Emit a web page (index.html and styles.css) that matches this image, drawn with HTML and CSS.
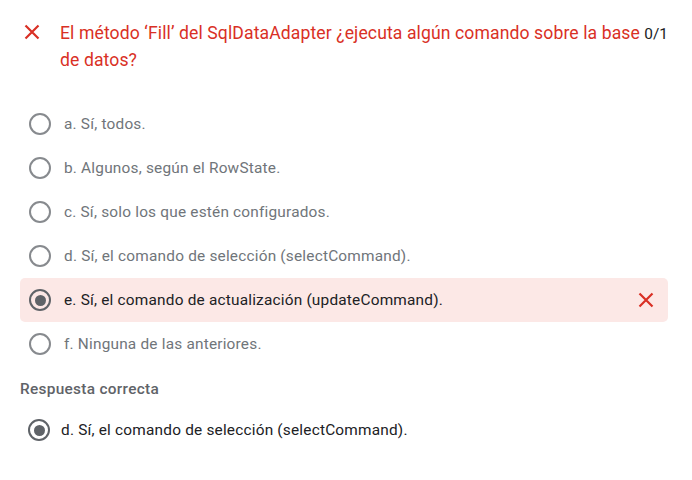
FILE: index.html
```html
<!DOCTYPE html>
<html lang="es">
<head>
<meta charset="utf-8">
<link rel="stylesheet" href="styles.css">
</head>
<body>
<div class="page">
  <div class="header">
    <svg class="x-icon" width="16" height="16" viewBox="0 0 16 16"><path d="M1.5 1.5 L14.5 14.5 M14.5 1.5 L1.5 14.5" stroke="#d93025" stroke-width="2.2" fill="none"/></svg>
    <div class="title">El método ‘Fill’ del SqlDataAdapter ¿ejecuta algún comando sobre la base de datos?</div>
    <div class="score">0/1</div>
  </div>
  <div class="options">
    <div class="row"><span class="radio"></span><span class="label">a. Sí, todos.</span></div>
    <div class="row"><span class="radio"></span><span class="label">b. Algunos, según el RowState.</span></div>
    <div class="row"><span class="radio"></span><span class="label">c. Sí, solo los que estén configurados.</span></div>
    <div class="row"><span class="radio"></span><span class="label">d. Sí, el comando de selección (selectCommand).</span></div>
    <div class="row wrong"><span class="radio checked"></span><span class="label">e. Sí, el comando de actualización (updateCommand).</span>
      <svg class="x-small" width="16" height="16" viewBox="0 0 16 16"><path d="M1.5 1.5 L14.5 14.5 M14.5 1.5 L1.5 14.5" stroke="#d93025" stroke-width="2.2" fill="none"/></svg>
    </div>
    <div class="row"><span class="radio"></span><span class="label">f. Ninguna de las anteriores.</span></div>
  </div>
  <div class="correct-title">Respuesta correcta</div>
  <div class="row correct"><span class="radio checked"></span><span class="label">d. Sí, el comando de selección (selectCommand).</span></div>
</div>
</body>
</html>
```
FILE: styles.css
```css
* { box-sizing: border-box; }
body { margin: 0; background: #fff; font-family: Roboto, "Noto Sans", Arial, sans-serif; }
.page { padding: 22px 24px 0 20px; }
.header { display: flex; align-items: flex-start; }
.x-icon { margin: 2px 0 0 4px; flex: none; }
.title {
  margin-left: 20px;
  flex: 1;
  font-family: Roboto, "Open Sans", sans-serif;
  font-size: 17.6px;
  line-height: 27px;
  letter-spacing: 0.1px;
  color: #d93025;
  margin-top: -2px;
}
.score { font-size: 15.4px; color: #202124; margin-top: 1px; line-height: 22px; }
.options { margin-top: 28px; }
.row {
  display: flex;
  align-items: center;
  height: 44px;
  padding-left: 9px;
  border-radius: 5px;
}
.radio {
  width: 22px; height: 22px;
  border: 2px solid #5f6368;
  border-radius: 50%;
  flex: none;
  display: flex; align-items: center; justify-content: center;
  opacity: 0.75;
}
.radio.checked { opacity: 1; }
.radio.checked::after {
  content: "";
  width: 11px; height: 11px; border-radius: 50%;
  background: #5f6368;
}
.label { margin-left: 13px; font-size: 15.4px; color: #70757a; letter-spacing: 0.2px; }
.wrong { background: #fce8e6; }
.wrong .label { color: #202124; }
.x-small { margin-left: auto; margin-right: 14px; }
.correct-title { margin-top: 12px; font-size: 15.4px; font-weight: 500; color: #5f6368; line-height: 22px; letter-spacing: 0.3px; }
.correct { margin-top: 8px; padding-left: 8px; }
.correct .label { margin-left: 11px; color: #202124; }
```
